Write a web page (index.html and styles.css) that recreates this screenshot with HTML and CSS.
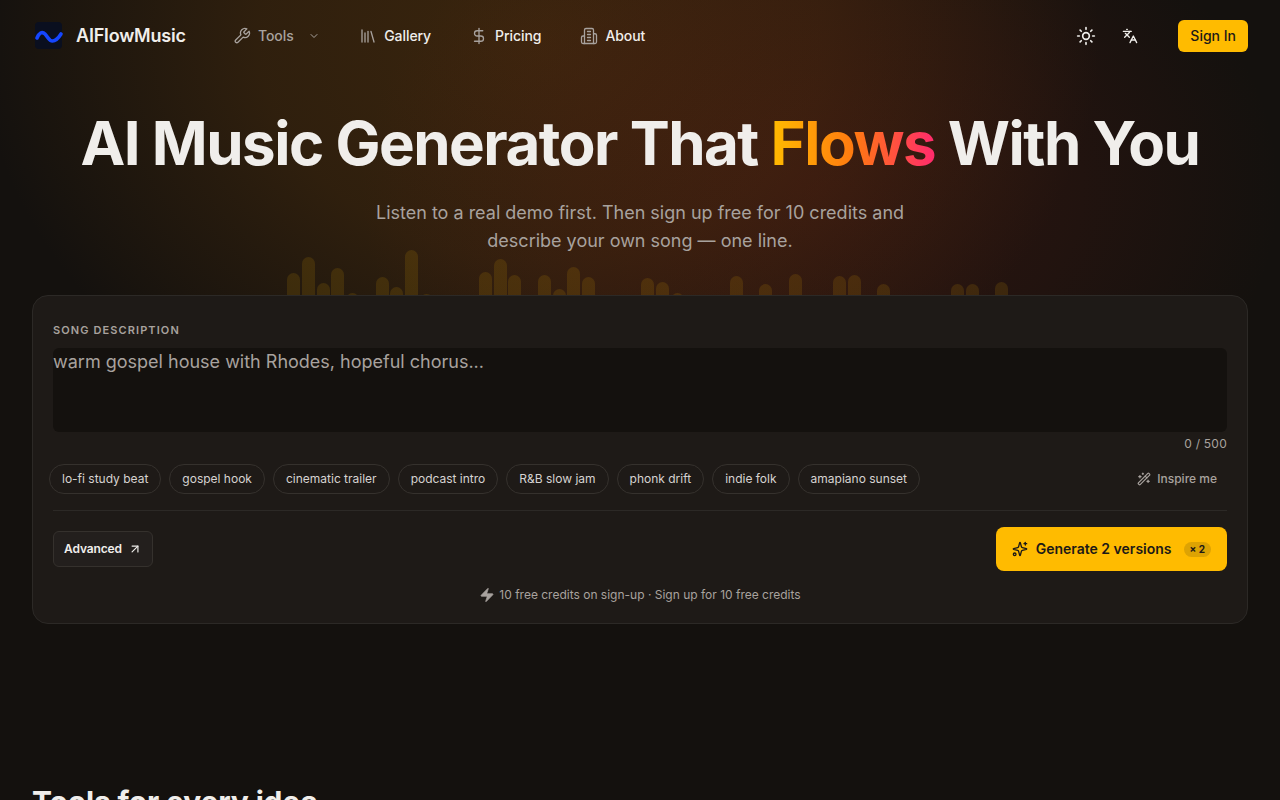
FILE: index.html
```html
<!DOCTYPE html>
<html lang="en">
<head>
    <meta charset="UTF-8">
    <meta name="viewport" content="width=device-width, initial-scale=1.0">
    <title>AIFlowMusic</title>
    <link rel="stylesheet" href="styles.css">
</head>
<body>
    <div class="glow"></div>

    <header class="topbar">
        <a class="brand" href="#">
            <svg class="brand-mark" viewBox="0 0 32 32" fill="none"><rect x="3" y="2" width="27" height="27" rx="4" fill="#0a0f1f"/><path d="M5 18c2-5 5-7 8-4s4 7 7.500 7 6-3 8.500-7" stroke="#1546ff" stroke-width="3.600" stroke-linecap="round"/></svg>
            <span>AIFlowMusic</span>
        </a>
        <nav class="nav">
            <a class="nav-item nav-tools" href="#">
                <svg class="icon" viewBox="0 0 24 24"><path d="M14.7 6.300a1 1 0 0 0 0 1.400l1.600 1.600a1 1 0 0 0 1.400 0l3.770-3.770a6 6 0 0 1-7.940 7.940l-6.910 6.910a2.120 2.120 0 0 1-3-3l6.910-6.910a6 6 0 0 1 7.940-7.940l-3.760 3.760z"/></svg>
                <span>Tools</span>
                <svg class="icon chevron" viewBox="0 0 24 24"><path d="m6 9 6 6 6-6"/></svg>
            </a>
            <a class="nav-item" href="#">
                <svg class="icon" viewBox="0 0 24 24"><path d="m16 6 4 14"/><path d="M12 6v14"/><path d="M8 8v12"/><path d="M4 4v16"/></svg>
                <span>Gallery</span>
            </a>
            <a class="nav-item" href="#">
                <svg class="icon" viewBox="0 0 24 24"><path d="M12 2v20"/><path d="M17 5H9.500a3.500 3.500 0 0 0 0 7h5a3.500 3.500 0 0 1 0 7H6"/></svg>
                <span>Pricing</span>
            </a>
            <a class="nav-item" href="#">
                <svg class="icon" viewBox="0 0 24 24"><path d="M6 22V4a2 2 0 0 1 2-2h8a2 2 0 0 1 2 2v18Z"/><path d="M6 12H4a2 2 0 0 0-2 2v6a2 2 0 0 0 2 2h2"/><path d="M18 9h2a2 2 0 0 1 2 2v9a2 2 0 0 1-2 2h-2"/><path d="M10 6h4"/><path d="M10 10h4"/><path d="M10 14h4"/><path d="M10 18h4"/></svg>
                <span>About</span>
            </a>
        </nav>
        <div class="actions">
            <button class="icon-btn">
                <svg class="icon icon-lg" viewBox="0 0 24 24"><circle cx="12" cy="12" r="4"/><path d="M12 2v2"/><path d="M12 20v2"/><path d="m4.930 4.930 1.410 1.410"/><path d="m17.660 17.660 1.410 1.410"/><path d="M2 12h2"/><path d="M20 12h2"/><path d="m6.340 17.660-1.410 1.410"/><path d="m19.070 4.930-1.410 1.410"/></svg>
            </button>
            <button class="icon-btn">
                <svg class="icon" viewBox="0 0 24 24"><path d="m5 8 6 6"/><path d="m4 14 6-6 2-3"/><path d="M2 5h12"/><path d="M7 2h1"/><path d="m22 22-5-10-5 10"/><path d="M14 18h6"/></svg>
            </button>
            <button class="signin">Sign In</button>
        </div>
    </header>

    <main>
        <section class="hero">
            <h1>AI Music Generator That <span class="flows">Flows</span> With You</h1>
            <p>Listen to a real demo first. Then sign up free for 10 credits and describe your own song — one line.</p>
            <div class="bars">
                <i style="height:36px"></i><i style="height:52px"></i><i style="height:26px"></i><i style="height:41px"></i><i style="height:16px"></i><i></i><i style="height:32px"></i><i style="height:22px"></i><i style="height:59px"></i><i style="height:15px"></i><i></i><i></i><i></i>
                <i style="height:37px"></i><i style="height:50px"></i><i style="height:34px"></i><i></i><i style="height:34px"></i><i style="height:20px"></i><i style="height:42px"></i><i style="height:32px"></i><i></i><i></i><i></i>
                <i style="height:31px"></i><i style="height:27px"></i><i style="height:16px"></i><i></i><i></i><i></i><i style="height:33px"></i><i></i><i style="height:25px"></i><i></i><i style="height:35px"></i><i></i><i></i>
                <i style="height:33px"></i><i style="height:34px"></i><i></i><i style="height:25px"></i><i></i><i></i><i></i><i></i>
                <i style="height:25px"></i><i style="height:25px"></i><i></i><i style="height:27px"></i>
            </div>
        </section>

        <section class="composer">
            <label class="field-label" for="song">SONG DESCRIPTION</label>
            <textarea id="song" class="song-input" placeholder="warm gospel house with Rhodes, hopeful chorus..."></textarea>
            <div class="counter">0 / 500</div>

            <div class="chip-row">
                <div class="chips">
                    <button class="chip">lo-fi study beat</button>
                    <button class="chip">gospel hook</button>
                    <button class="chip">cinematic trailer</button>
                    <button class="chip">podcast intro</button>
                    <button class="chip">R&amp;B slow jam</button>
                    <button class="chip">phonk drift</button>
                    <button class="chip">indie folk</button>
                    <button class="chip">amapiano sunset</button>
                </div>
                <button class="inspire">
                    <svg class="icon icon-sm" viewBox="0 0 24 24"><path d="m21.640 3.640-1.280-1.280a1.210 1.210 0 0 0-1.720 0L2.360 18.640a1.210 1.210 0 0 0 0 1.720l1.280 1.280a1.200 1.200 0 0 0 1.720 0L21.640 5.360a1.200 1.200 0 0 0 0-1.720"/><path d="m14 7 3 3"/><path d="M5 6v4"/><path d="M19 14v4"/><path d="M10 2v2"/><path d="M7 8H3"/><path d="M21 16h-4"/><path d="M11 3H9"/></svg>
                    <span>Inspire me</span>
                </button>
            </div>

            <div class="composer-actions">
                <button class="advanced">
                    <span>Advanced</span>
                    <svg class="icon icon-sm" viewBox="0 0 24 24"><path d="M7 7h10v10"/><path d="M7 17 17 7"/></svg>
                </button>
                <button class="generate">
                    <svg class="icon" viewBox="0 0 24 24"><path d="M9.937 15.500A2 2 0 0 0 8.500 14.063l-6.135-1.582a.5.500 0 0 1 0-.962L8.500 9.936A2 2 0 0 0 9.937 8.500l1.582-6.135a.5.500 0 0 1 .963 0L14.063 8.500A2 2 0 0 0 15.500 9.937l6.135 1.581a.5.500 0 0 1 0 .964L15.500 14.063a2 2 0 0 0-1.437 1.437l-1.582 6.135a.5.500 0 0 1-.963 0z"/><path d="M20 2v4"/><path d="M22 4h-4"/><circle cx="4" cy="20" r="2"/></svg>
                    <span class="generate-label">Generate 2 versions</span>
                    <span class="badge">× 2</span>
                </button>
            </div>

            <p class="note">
                <svg class="zap" viewBox="0 0 24 24"><path d="M4 14a1 1 0 0 1-.78-1.630l9.900-10.200a.5.500 0 0 1 .86.460l-1.920 6.020A1 1 0 0 0 13 10h7a1 1 0 0 1 .78 1.630l-9.900 10.200a.5.500 0 0 1-.86-.460l1.920-6.020A1 1 0 0 0 11 14z"/></svg>
                <span>10 free credits on sign-up · Sign up for 10 free credits</span>
            </p>
        </section>

        <section class="tools">
            <h2>Tools for every idea</h2>
        </section>
    </main>
</body>
</html>
```

FILE: styles.css
```css
* {
    box-sizing: border-box;
}

html, body {
    height: 800px;
    overflow: hidden;
}

body {
    margin: 0;
    position: relative;
    background-color: #14110e;
    color: #f0eeeb;
    font-family: 'Inter', 'Liberation Sans', sans-serif;
}

a {
    color: inherit;
    text-decoration: none;
}

button {
    font-family: inherit;
    border: none;
    background: none;
    color: inherit;
    cursor: pointer;
    padding: 0;
}

.glow {
    position: absolute;
    top: 0;
    left: 0;
    width: 1280px;
    height: 460px;
    background:
        radial-gradient(ellipse 460px 340px at 820px 190px, rgba(105, 30, 20, 0.30), rgba(105, 30, 20, 0.16) 55%, transparent 100%),
        radial-gradient(ellipse 560px 440px at 540px 40px, rgba(125, 72, 12, 0.36), rgba(125, 72, 12, 0.26) 50%, transparent 100%);
}

.icon {
    width: 16px;
    height: 16px;
    fill: none;
    stroke: currentColor;
    stroke-width: 2;
    stroke-linecap: round;
    stroke-linejoin: round;
    flex-shrink: 0;
}

.icon-lg {
    width: 20px;
    height: 20px;
}

.icon-sm {
    width: 14px;
    height: 14px;
}

/* top bar */
.topbar {
    position: relative;
    display: flex;
    align-items: center;
    height: 72px;
    padding: 0 32px;
}

.brand {
    display: flex;
    align-items: center;
    gap: 12px;
    width: 202px;
    font-size: 18px;
    font-weight: 600;
    letter-spacing: -0.01em;
}

.brand span {
    margin-top: -2px;
}

.brand-mark {
    width: 32px;
    height: 32px;
}

.nav {
    display: flex;
    align-items: center;
    gap: 40px;
}

.nav-item {
    display: flex;
    align-items: center;
    gap: 8px;
    font-size: 14px;
    font-weight: 500;
    letter-spacing: -0.005em;
}

.nav-item span {
    margin-top: -2px;
}

.nav-item .icon {
    width: 18px;
    height: 18px;
    margin: 0 -1px;
    stroke-width: 1.750;
    color: #a8a29e;
}

.nav-tools {
    color: #a8a29e;
}

.nav-item .chevron {
    width: 12px;
    height: 12px;
    margin-left: 6px;
    margin-right: 0.500px;
    stroke-width: 2;
}

.actions {
    display: flex;
    align-items: center;
    gap: 12px;
    margin-left: auto;
}

.icon-btn {
    display: flex;
    align-items: center;
    justify-content: center;
    width: 32px;
    height: 32px;
}

.signin {
    height: 32px;
    margin-left: 20px;
    padding: 0 12px 2px;
    border-radius: 6px;
    background-color: #ffbb00;
    color: #1c1917;
    font-size: 14px;
    font-weight: 500;
}

/* hero */
.hero {
    position: relative;
    height: 223px;
    padding-top: 35px;
    text-align: center;
}

.hero h1 {
    margin: 0;
    font-size: 60px;
    line-height: 72px;
    font-weight: 700;
    letter-spacing: -0.025em;
}

.flows {
    background: linear-gradient(90deg, #ffbb00, #ff7a10 50%, #ff2a6d);
    -webkit-background-clip: text;
    background-clip: text;
    color: transparent;
}

.hero p {
    width: 576px;
    margin: 20px auto 0;
    font-size: 18px;
    line-height: 28px;
    color: #a8a29e;
}

.bars {
    position: absolute;
    left: 287px;
    bottom: -14px;
    display: flex;
    align-items: flex-end;
    gap: 1.750px;
}

.bars i {
    display: block;
    flex: none;
    width: 13px;
    height: 0;
    border-radius: 7px 7px 0 0;
    background-color: rgba(255, 187, 0, 0.12);
}

/* composer card */
.composer {
    position: relative;
    height: 329px;
    margin: 0 32px;
    padding: 26px 20px 0;
    border: 1px solid #2c2926;
    border-radius: 16px;
    background-color: #1e1a17;
}

.field-label {
    display: block;
    height: 16px;
    font-size: 11px;
    line-height: 16px;
    font-weight: 600;
    letter-spacing: 0.1em;
    color: #a8a29e;
}

.song-input {
    display: block;
    width: 100%;
    height: 84px;
    margin-top: 10px;
    padding: 0;
    border: none;
    outline: none;
    resize: none;
    border-radius: 6px;
    background-color: #14110e;
    color: #f0eeeb;
    font-family: inherit;
    font-size: 18px;
    line-height: 28px;
}

.song-input::placeholder {
    color: #a8a29e;
    opacity: 1;
}

.counter {
    margin-top: 4px;
    height: 16px;
    text-align: right;
    font-size: 12px;
    line-height: 16px;
    letter-spacing: 0.02em;
    color: #a8a29e;
}

.chip-row {
    display: flex;
    align-items: center;
    justify-content: space-between;
    margin: 12px 0 0 -4px;
}

.chips {
    display: flex;
    gap: 8px;
}

.chip {
    height: 30px;
    padding: 0 12px 2px;
    border: 1px solid #35312d;
    border-radius: 15px;
    font-size: 12px;
    color: #d6d3d1;
}

.inspire {
    display: flex;
    align-items: center;
    gap: 6px;
    height: 30px;
    padding: 0 10px 0;
    font-size: 12px;
    font-weight: 500;
    color: #a8a29e;
}

.inspire span {
    margin-top: -2px;
}

.composer-actions {
    display: flex;
    align-items: center;
    justify-content: space-between;
    margin-top: 16px;
    padding-top: 16px;
    border-top: 1px solid #2c2926;
}

.advanced {
    display: flex;
    align-items: center;
    gap: 6px;
    height: 36px;
    padding: 0 10px;
    border: 1px solid #35312d;
    border-radius: 6px;
    background-color: #231f1d;
    font-size: 12px;
    font-weight: 600;
    letter-spacing: -0.01em;
}

.advanced span {
    margin-top: -2px;
}

.generate {
    display: flex;
    align-items: center;
    gap: 8px;
    height: 44px;
    padding: 0 16px;
    border-radius: 8px;
    background-color: #ffbb00;
    color: #1c1917;
    font-size: 14px;
    font-weight: 600;
}

.generate-label {
    margin-top: -2px;
}

.badge {
    margin-left: 4px;
    padding: 1px 6px;
    border-radius: 8px;
    background-color: rgba(28, 25, 23, 0.15);
    font-size: 10px;
    line-height: 13px;
    font-weight: 700;
}

.note {
    display: flex;
    align-items: center;
    justify-content: center;
    gap: 4px;
    margin: 16px 0 0;
    font-size: 12px;
    line-height: 16px;
    color: #a8a29e;
}

.zap {
    width: 16px;
    height: 16px;
    fill: currentColor;
    stroke: currentColor;
    stroke-width: 1;
    stroke-linejoin: round;
}

/* tools section */
.tools {
    padding: 160px 32px 0;
}

.tools h2 {
    margin: 0;
    font-size: 30px;
    line-height: 36px;
    font-weight: 700;
    letter-spacing: -0.005em;
}
```
